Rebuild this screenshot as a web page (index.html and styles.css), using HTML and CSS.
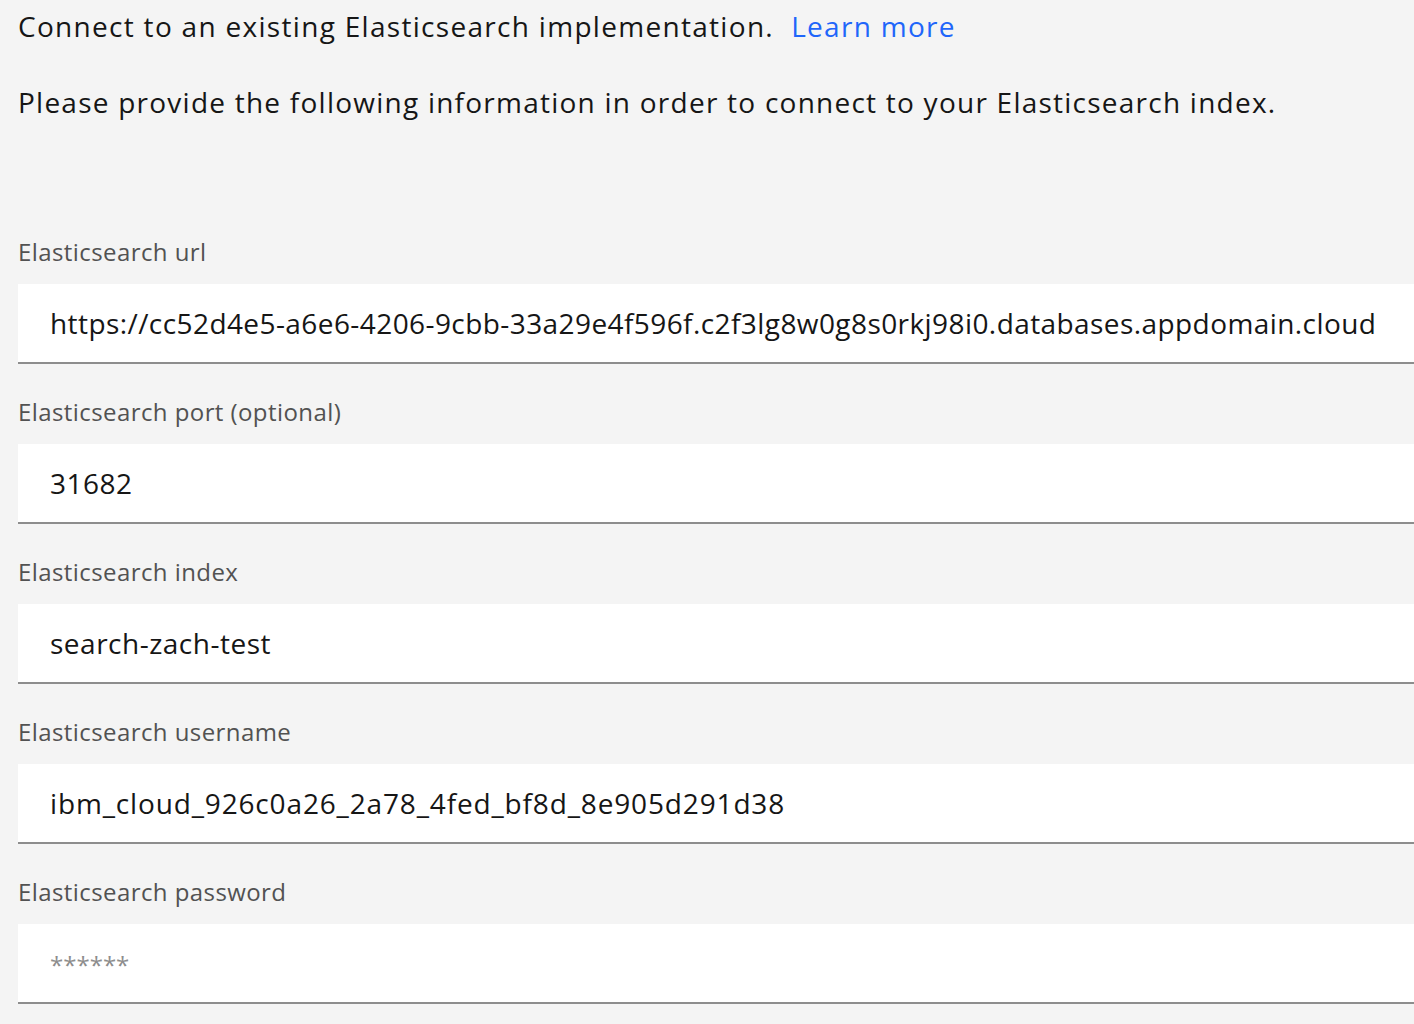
FILE: index.html
```html
<!DOCTYPE html>
<html lang="en">
<head>
<meta charset="utf-8">
<title>Elasticsearch connection</title>
<link rel="stylesheet" href="styles.css">
</head>
<body>
<main class="page">
  <p class="intro">Connect to an existing Elasticsearch implementation.&nbsp; <a class="link" href="#">Learn more</a></p>
  <p class="intro intro-second">Please provide the following information in order to connect to your Elasticsearch index.</p>

  <form class="form">
    <div class="field">
      <label class="label" for="url">Elasticsearch url</label>
      <input class="input input-long" id="url" type="text" value="https://cc52d4e5-a6e6-4206-9cbb-33a29e4f596f.c2f3lg8w0g8s0rkj98i0.databases.appdomain.cloud">
    </div>
    <div class="field">
      <label class="label" for="port">Elasticsearch port (optional)</label>
      <input class="input" id="port" type="text" value="31682">
    </div>
    <div class="field">
      <label class="label" for="index">Elasticsearch index</label>
      <input class="input" id="index" type="text" value="search-zach-test">
    </div>
    <div class="field">
      <label class="label" for="user">Elasticsearch username</label>
      <input class="input input-wide" id="user" type="text" value="ibm_cloud_926c0a26_2a78_4fed_bf8d_8e905d291d38">
    </div>
    <div class="field">
      <label class="label" for="pass">Elasticsearch password</label>
      <input class="input input-secret" id="pass" type="text" placeholder="******">
    </div>
  </form>
</main>
</body>
</html>
```

FILE: styles.css
```css
html, body {
  margin: 0;
  padding: 0;
  background: #f4f4f4;
  overflow: hidden;
}

.page {
  padding: 6px 0 0 18px;
  font-family: "Open Sans", "Noto Sans", sans-serif;
  color: #161616;
}

.intro {
  margin: 0;
  font-size: 28px;
  line-height: 40px;
  letter-spacing: 1.3px;
}

.intro-second {
  margin-top: 36px;
  letter-spacing: 1.24px;
}

.link {
  color: #1f66fa;
  text-decoration: none;
}

.form {
  margin-top: 114px;
  display: flex;
  flex-direction: column;
  gap: 32px;
}

.field {
  display: flex;
  flex-direction: column;
}

.label {
  font-size: 24px;
  line-height: 32px;
  letter-spacing: 0.42px;
  color: #525252;
  margin-bottom: 16px;
}

.input {
  box-sizing: border-box;
  width: 100%;
  height: 80px;
  margin: 0;
  padding: 0 0 0 32px;
  border: 0;
  border-bottom: 2px solid #8d8d8d;
  background: #ffffff;
  font-family: "Open Sans", "Noto Sans", sans-serif;
  font-size: 28px;
  letter-spacing: 0.5px;
  color: #161616;
  outline: none;
}

.input-long {
  letter-spacing: 0.42px;
}

.input-wide {
  letter-spacing: 0.85px;
}

.input-secret::placeholder {
  color: #8d8d8d;
  font-size: 24px;
  letter-spacing: 0;
  opacity: 1;
}
```
